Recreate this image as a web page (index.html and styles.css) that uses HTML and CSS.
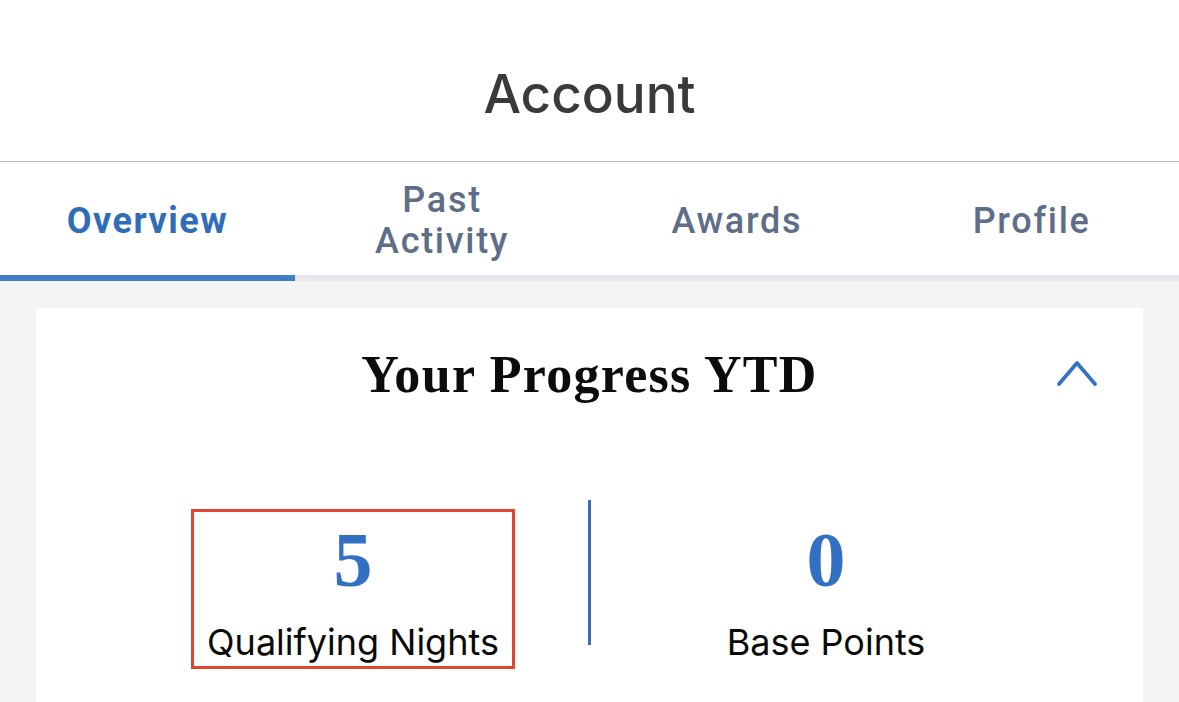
FILE: index.html
```html
<!DOCTYPE html>
<html lang="en">
<head>
    <meta charset="UTF-8">
    <meta name="viewport" content="width=device-width, initial-scale=1.0">
    <title>Account</title>
    <link rel="stylesheet" href="styles.css">
</head>
<body>
    <div class="header">Account</div>

    <ul class="tabs">
        <li class="tab-selected">Overview</li>
        <li>Past<br>Activity</li>
        <li>Awards</li>
        <li>Profile</li>
    </ul>
    <div class="tab-bar"><span class="tab-bar-on"></span></div>

    <div class="main">
        <div class="card">
            <div class="card-head">
                <span></span>
                <h2 class="card-title">Your Progress YTD</h2>
                <span class="toggle">
                    <svg width="44" height="30" viewBox="0 0 44 30">
                        <polyline points="4,25 22,4 40,25" fill="none" stroke="#3572c0" stroke-width="3.8" stroke-linecap="round" stroke-linejoin="round"/>
                    </svg>
                </span>
            </div>
            <div class="stats">
                <div class="stat stat-marked">
                    <div class="stat-num">5</div>
                    <div class="stat-label">Qualifying Nights</div>
                </div>
                <div class="stat-line"></div>
                <div class="stat">
                    <div class="stat-num">0</div>
                    <div class="stat-label">Base Points</div>
                </div>
            </div>
        </div>
    </div>
</body>
</html>
```

FILE: styles.css
```css
*{
    margin: 0;
    padding: 0;
}
body{
    background: #f4f4f5;
    font-family: "Inter", "Liberation Sans", sans-serif;
    overflow: hidden;
}
.header{
    height: 162px;
    background: #fff;
    border-bottom: 1px solid #bcbcbc;
    display: flex;
    align-items: center;
    justify-content: center;
    padding-top: 26px;
    box-sizing: border-box;
    font-family: "Inter", "Liberation Sans", sans-serif;
    font-size: 53px;
    font-weight: 500;
    color: #3a3a38;
}
.tabs{
    display: grid;
    grid-template-columns: repeat(4, 1fr);
    height: 113px;
    background: #fff;
    list-style: none;
}
.tabs li{
    display: flex;
    align-items: center;
    justify-content: center;
    text-align: center;
    font-family: "Roboto", "Liberation Sans", sans-serif;
    font-size: 36px;
    font-weight: 500;
    letter-spacing: 1.7px;
    line-height: 41px;
    color: #5f6e88;
    padding-top: 5px;
}
.tabs .tab-selected{
    color: #2f6db8;
    font-weight: 700;
    letter-spacing: 1.5px;
}
.tab-bar{
    height: 6px;
    background: #e8e9ee;
}
.tab-bar-on{
    display: block;
    width: 25%;
    height: 6px;
    background: #3f7fc6;
}
.main{
    padding: 27px 36px 0;
}
.card{
    background: #fff;
    height: 394px;
}
.card-head{
    display: grid;
    grid-template-columns: 1fr auto 1fr;
    align-items: center;
    height: 132px;
}
.card-title{
    font-family: "Liberation Serif", serif;
    font-size: 52px;
    font-weight: 700;
    letter-spacing: 1.3px;
    color: #0c0c0c;
}
.toggle{
    justify-self: end;
    margin-right: 44px;
    height: 30px;
}
.stats{
    display: flex;
    justify-content: center;
    align-items: flex-start;
    padding-top: 60px;
}
.stat{
    width: 324px;
    height: 160px;
    margin-top: 9px;
    border: 3px solid transparent;
    box-sizing: border-box;
    text-align: center;
}
.stat-marked{
    border-color: #e2452d;
}
.stat-num{
    font-family: "Liberation Serif", serif;
    font-size: 78px;
    font-weight: 700;
    line-height: 80px;
    color: #3270c4;
    padding-top: 8px;
}
.stat-label{
    font-size: 36px;
    line-height: 44px;
    color: #0a0a0a;
    margin-top: 20px;
}
.stat-line{
    width: 3px;
    height: 145px;
    margin: 0 73px;
    background: #3a6db5;
}
```
